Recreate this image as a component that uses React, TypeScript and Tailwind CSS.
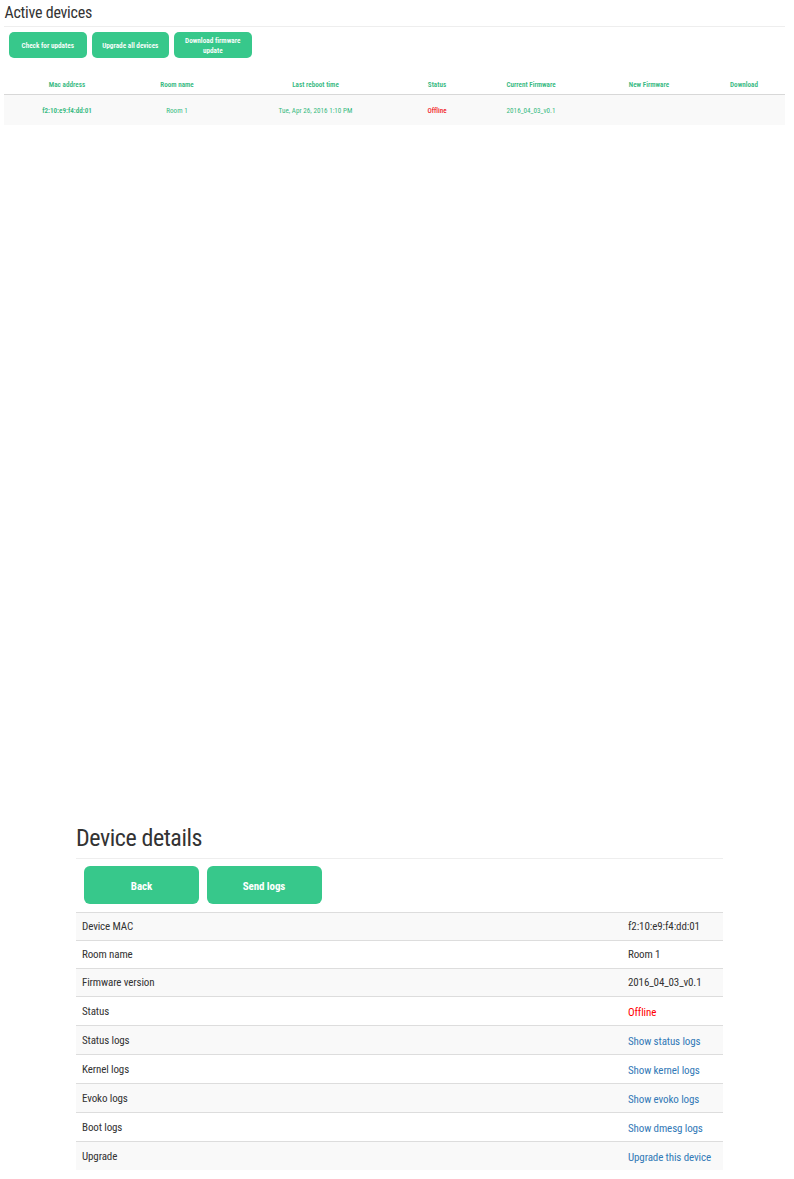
import clsx from "clsx";

const columns = [
  { label: "Mac address", value: "f2:10:e9:f4:dd:01", width: "w-[126px]", className: "font-semibold" },
  { label: "Room name", value: "Room 1", width: "w-[94px]" },
  { label: "Last reboot time", value: "Tue, Apr 26, 2016 1:10 PM", width: "w-[183px]" },
  { label: "Status", value: "Offline", width: "w-[60px]", className: "font-medium text-[#f21f2b]" },
  { label: "Current Firmware", value: "2016_04_03_v0.1", width: "w-[128px]" },
  { label: "New Firmware", value: "", width: "w-[108px]" },
  { label: "Download", value: "", width: "w-[82px]" },
];

const details = [
  { label: "Device MAC", value: "f2:10:e9:f4:dd:01", height: "h-[28px]" },
  { label: "Room name", value: "Room 1", height: "h-[28px]" },
  { label: "Firmware version", value: "2016_04_03_v0.1", height: "h-[28px]" },
  { label: "Status", value: "Offline", height: "h-[29px]", color: "pt-[2px] text-[#ff0000]" },
  { label: "Status logs", value: "Show status logs", height: "h-[29px]", link: true },
  { label: "Kernel logs", value: "Show kernel logs", height: "h-[29px]", link: true },
  { label: "Evoko logs", value: "Show evoko logs", height: "h-[29px]", link: true },
  { label: "Boot logs", value: "Show dmesg logs", height: "h-[29px]", link: true },
  { label: "Upgrade", value: "Upgrade this device", height: "h-[29px]", link: true },
];

function ActiveDevices() {
  return (
    <section className="ml-1 w-[781px]">
      <h1 className="h-[27px] border-b border-[#eeeeee] pl-[0.5px] text-[16px] leading-[25px] tracking-[-0.25px] text-[#333333]">
        Active devices
      </h1>
      <div className="mt-[5px] ml-[5px] flex gap-[5px]">
        {["Check for updates", "Upgrade all devices", "Download firmware update"].map((label) => (
          <button
            key={label}
            className="h-[26px] w-[77.5px] rounded-[5px] bg-[#37c88b] px-2 pt-px text-[7.2px] leading-[10px] font-semibold tracking-[0.01px] text-white"
          >
            {label}
          </button>
        ))}
      </div>
      <table className="mt-[17px] w-full table-fixed border-collapse text-center text-[7.1px] tracking-[0.02px] text-[#35b97f]">
        <thead>
          <tr className="h-[19px] border-b border-[#d8d8d8]">
            {columns.map((c) => (
              <th key={c.label} className={clsx("p-0 pt-[3px] font-semibold", c.width)}>
                {c.label}
              </th>
            ))}
          </tr>
        </thead>
        <tbody>
          <tr className="h-[31px] bg-[#f9f9f9]">
            {columns.map((c) => (
              <td key={c.label} className={clsx("p-0 pt-[3px]", c.className)}>
                {c.value}
              </td>
            ))}
          </tr>
        </tbody>
      </table>
    </section>
  );
}

function DeviceDetails() {
  return (
    <section className="mt-[691px] ml-[76px] w-[647px]">
      <h2 className="h-[43px] border-b border-[#eeeeee] text-[24px] leading-[44px] tracking-[-0.43px] text-[#333333]">
        Device details
      </h2>
      <div className="mt-[7px] mb-2 ml-2 flex gap-[7.5px]">
        {["Back", "Send logs"].map((label) => (
          <button
            key={label}
            className="h-[38px] w-[115px] rounded-[6px] bg-[#37c88b] pt-[4px] text-[11px] font-bold tracking-[-0.1px] text-white"
          >
            {label}
          </button>
        ))}
      </div>
      {details.map((row) => (
        <div
          key={row.label}
          className={clsx(
            "flex items-center border-t border-[#dddddd] pt-[2px] pl-1.5 text-[11px] tracking-[-0.12px] text-[#333333] odd:bg-[#f9f9f9]",
            row.height
          )}
        >
          <span className="w-[546px]">{row.label}</span>
          {row.link ? (
            <a href="#" className="pt-[2px] text-[#337ab7]">
              {row.value}
            </a>
          ) : (
            <span className={row.color}>{row.value}</span>
          )}
        </div>
      ))}
    </section>
  );
}

export default function App() {
  return (
    <main className="flow-root h-[1179px] w-[794px] overflow-hidden bg-white font-['Roboto_Condensed','Roboto',sans-serif] font-stretch-condensed">
      <ActiveDevices />
      <DeviceDetails />
    </main>
  );
}
